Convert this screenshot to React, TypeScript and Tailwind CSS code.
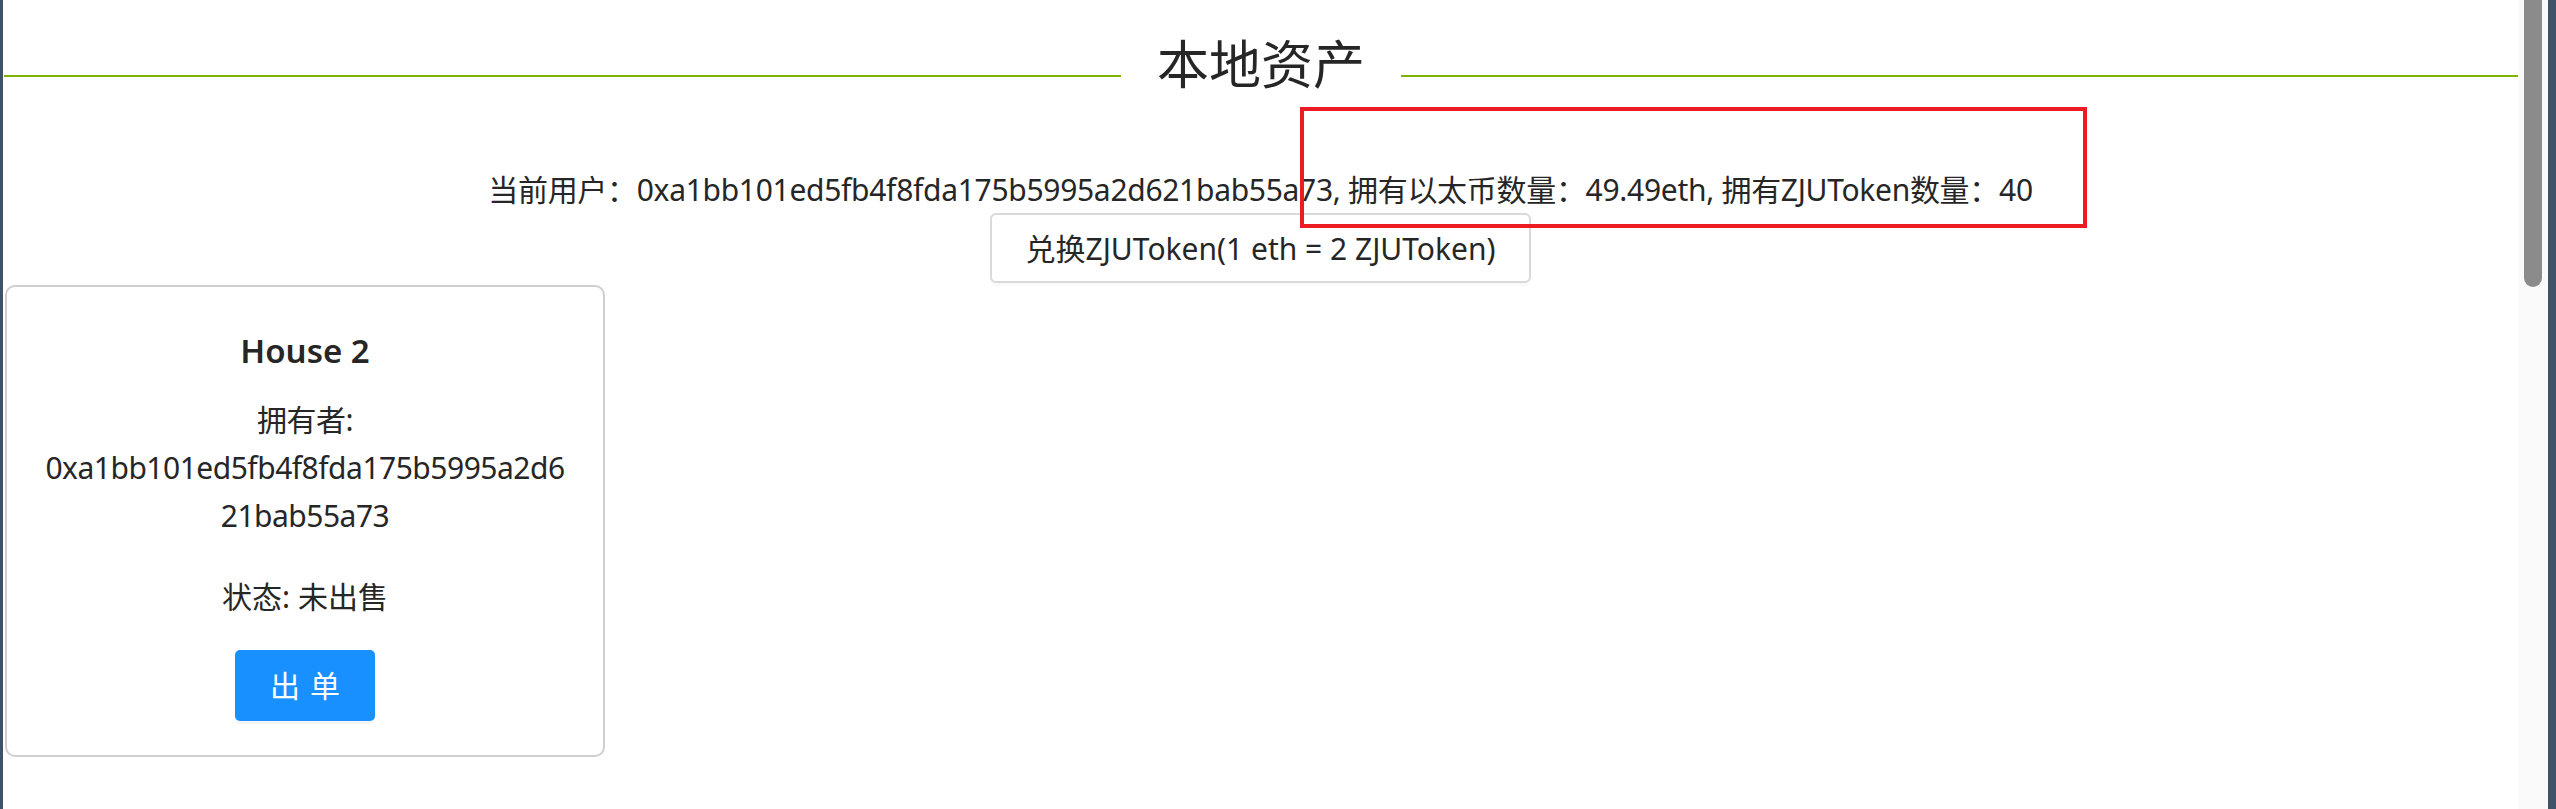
import React from 'react';

const address = '0xa1bb101ed5fb4f8fda175b5995a2d621bab55a73';

const HouseCard: React.FC = () => {
  return (
    <div className="ml-[2px] mt-[2px] flex w-[600px] flex-col items-center rounded-[10px] border-2 border-[#cfcfcf] px-[36px] pb-[34px] pt-[40px] text-center">
      <h3 className="text-[33px] font-semibold leading-[48px]">House 2</h3>
      <div className="mt-[21px] w-full text-[30px] leading-[48px] tracking-[-0.5px]">
        <p>拥有者:</p>
        <p className="break-all">{address}</p>
      </div>
      <p className="mt-[33px] text-[30px] leading-[48px]">状态: 未出售</p>
      <button className="mt-[29px] flex h-[71px] w-[140px] items-center justify-center rounded-[5px] bg-[#1890ff] text-[30px] text-white shadow-[0_3px_0_rgba(0,0,0,0.045)]">
        <span className="-mr-[0.34em] tracking-[0.34em]">出单</span>
      </button>
    </div>
  );
};

export default function App() {
  return (
    <div className="flex h-[809px] w-full overflow-hidden bg-white font-['Noto_Sans','Noto_Sans_CJK_SC',sans-serif] text-[#262626]">
      <div className="w-[3px] shrink-0 bg-[#415168]" />

      <main className="relative min-w-0 flex-1 pt-[33px]">
        <div className="flex items-center">
          <div className="ml-px mt-[24px] h-[2px] flex-1 bg-[#7cb305]" />
          <h1 className="px-[36px] text-[52px] font-normal leading-[62px]">本地资产</h1>
          <div className="mt-[24px] h-[2px] flex-1 bg-[#7cb305]" />
        </div>

        <p className="mt-[71px] text-center text-[30px] leading-[47px] tracking-[-0.3px]">
          当前用户：{address}, 拥有以太币数量：49.49eth, 拥有ZJUToken数量：40
        </p>

        <div className="flex justify-center">
          <button className="h-[70px] rounded-[6px] border-2 border-[#d9d9d9] bg-white px-[34px] text-[30px] shadow-[0_3px_0_rgba(0,0,0,0.02)]">
            兑换ZJUToken(1 eth = 2 ZJUToken)
          </button>
        </div>

        <HouseCard />

        {/* red annotation box */}
        <div className="pointer-events-none absolute left-[1297px] top-[107px] h-[121px] w-[787px] border-4 border-[#ed1c24]" />
      </main>

      <div className="w-[30px] shrink-0 bg-[#fafafa] px-[6px]">
        <div className="h-[287px] rounded-b-[9px] bg-[#8b8b8b]" />
      </div>
      <div className="w-[8px] shrink-0 bg-[#415168]" />
    </div>
  );
}
